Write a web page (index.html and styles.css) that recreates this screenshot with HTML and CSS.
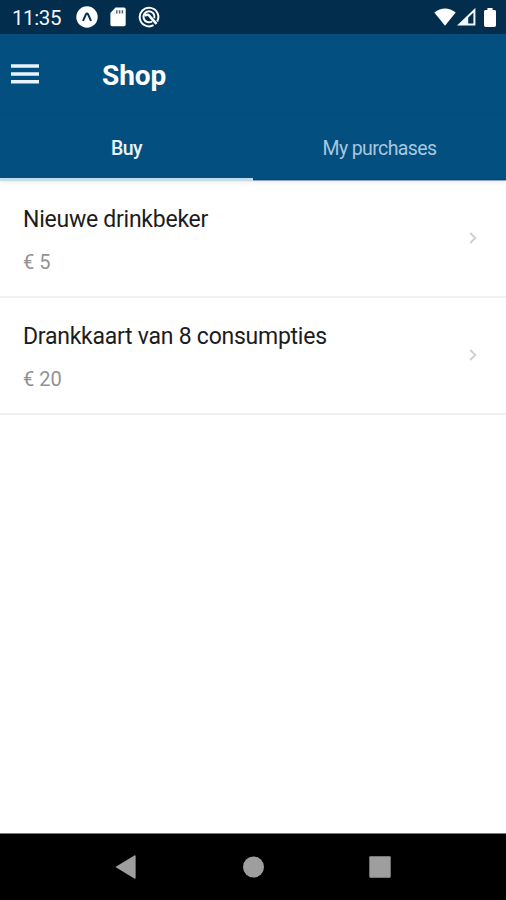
FILE: index.html
```html
<!DOCTYPE html>
<html lang="en">
<head>
<meta charset="utf-8">
<title>Shop</title>
<link rel="stylesheet" href="styles.css">
</head>
<body>
<div class="app">
  <div class="status">
    <span class="time">11:35</span>
    <svg class="expo" width="22" height="22" viewBox="0 0 22 22"><circle cx="11" cy="11" r="10.7" fill="#fff"/><path d="M7 14.8 10 8.2Q11 6.6 12 8.2L15 14.8" fill="none" stroke="#032d4c" stroke-width="2"/></svg>
    <svg class="card" width="16" height="20" viewBox="0 0 16 20"><path d="M5.5.5H14Q15.7.5 15.7 2.2V17.5Q15.7 19.2 14 19.2H2Q.4 19.2.4 17.5V6Z" fill="#fff"/><path d="M6.8 3.2v3.2M9.6 3.2v3.2M12.4 3.2v3.2" stroke="#4b6680" stroke-width="1.5"/></svg>
    <svg class="sync" width="22" height="22" viewBox="0 0 22 22" fill="none" stroke="#fff" stroke-width="2"><path d="M15.5 19.2A9.3 9.3 0 1 1 19.2 15.5"/><path d="M14.2 15.3A5.5 5.5 0 1 1 16.3 12.3"/><path d="M6.8 9.6Q10.2 7.4 12 10.6L18.5 17.8" stroke-width="2.6"/></svg>
    <div class="signals">
      <svg width="22" height="18" viewBox="0 0 22 18"><path d="M.3 4.5Q11-3.5 21.7 4.5L11 17.8Z" fill="#fff"/></svg>
      <svg width="19" height="18" viewBox="0 0 19 18"><path d="M17.4 2.2V16.6H2.5Z" fill="none" stroke="#f2f5fa" stroke-width="2"/><path d="M2.5 16.6 11.2 8.2V16.6Z" fill="#f2f5fa"/></svg>
      <svg width="12" height="19" viewBox="0 0 12 19"><path d="M3.4 0H8.6V2H10.5Q12 2 12 3.5V17.3Q12 19 10.3 19H1.7Q0 19 0 17.3V3.5Q0 2 1.5 2H3.4Z" fill="#fff"/></svg>
    </div>
  </div>
  <header class="header">
    <svg class="menu" width="28" height="20" viewBox="0 0 28 20"><path d="M0 2H28M0 10H28M0 17.7H28" stroke="#e9f3fb" stroke-width="3.4"/></svg>
    <h1 class="title">Shop</h1>
  </header>
  <nav class="tabs">
    <div class="tab active"><span class="buy">Buy</span></div>
    <div class="tab"><span class="purchases">My purchases</span></div>
  </nav>
  <main class="list">
    <div class="row">
      <div class="info"><div class="name">Nieuwe drinkbeker</div><div class="price">€ 5</div></div>
      <svg class="chevron" width="8" height="12" viewBox="0 0 8 12"><path d="M1.3 1 6.3 6 1.3 11" fill="none" stroke="#cfcfd1" stroke-width="1.9"/></svg>
    </div>
    <div class="row">
      <div class="info"><div class="name">Drankkaart van 8 consumpties</div><div class="price">€ 20</div></div>
      <svg class="chevron" width="8" height="12" viewBox="0 0 8 12"><path d="M1.3 1 6.3 6 1.3 11" fill="none" stroke="#cfcfd1" stroke-width="1.9"/></svg>
    </div>
  </main>
  <footer class="navbar">
    <svg width="22" height="24" viewBox="0 0 22 24"><path d="M.4 12 19.3.5Q20.6 0 20.6 1.3V22.7Q20.6 24 19.3 23.5Z" fill="#9e9e9e"/></svg>
    <svg width="22" height="24" viewBox="0 0 22 24"><circle cx="11.5" cy="12" r="10.5" fill="#9e9e9e"/></svg>
    <svg width="22" height="24" viewBox="0 0 22 24"><rect x=".3" y="1.3" width="21.4" height="21.4" rx="1" fill="#9e9e9e"/></svg>
  </footer>
</div>
</body>
</html>
```
FILE: styles.css
```css
* { box-sizing: border-box; }
body { margin: 0; font-family: Roboto, sans-serif; background: #fff; }
svg { display: block; flex: none; }
.app { width: 506px; height: 900px; display: flex; flex-direction: column; overflow: hidden; }
.status { height: 34px; background: #032d4c; display: flex; align-items: center; padding: 0 10px 0 12px; flex: none; }
.time { color: #f2f5fa; font-size: 20.5px; letter-spacing: -.4px; width: 64px; line-height: 34px; padding-top: 2px; }
.card { margin-left: 12px; }
.sync { margin-left: 12px; }
.signals { display: flex; align-items: center; margin-left: auto; gap: 1px; }
.signals svg:last-child { margin-left: 7px; }
.header { height: 81px; background: #034f80; display: flex; align-items: center; padding-left: 11px; flex: none; }
.menu { margin-bottom: 2px; }
.title { margin: 0 0 0 63px; color: #fff; font-size: 28px; font-weight: 700; line-height: 32px; padding-top: 2px; letter-spacing: -.1px; }
.tabs { height: 66px; background: #034f80; display: flex; flex: none; border-bottom: 1px solid #8fa9c5; box-shadow: 0 1px 4px #0000001a; }
.tab { flex: 1; text-align: center; color: #a9c7de; font-size: 19.5px; letter-spacing: -.6px; line-height: 68px; border-bottom: 1px solid #034275; }
.active { color: #eaf3fb; border-bottom: 3px solid #c4dce8; margin-bottom: -1px; }
.buy { font-weight: 500; }
.list { flex: 1; }
.row { height: 117px; border-bottom: 2px solid #f1f1f1; display: flex; align-items: center; justify-content: space-between; padding: 0 29px 0 23px; }
.info { padding-top: 2px; }
.name { color: #1c1c1c; font-size: 23px; letter-spacing: -.25px; line-height: 30px; }
.price { color: #929292; font-size: 20px; line-height: 26px; margin-top: 14px; }
.chevron { margin-bottom: 2px; }
.navbar { height: 67px; background: #000; border-top: 1px solid #777; display: flex; align-items: center; justify-content: center; gap: 105px; flex: none; }
```
